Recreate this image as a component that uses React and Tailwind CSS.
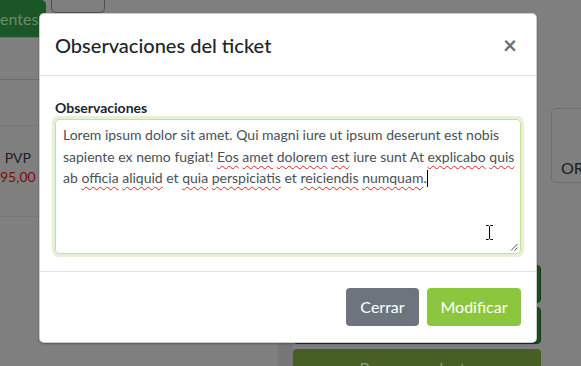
const Sq = ({ children }) => (
  <span className="underline decoration-wavy decoration-[#e02020] decoration-1 underline-offset-[3px]">
    {children}
  </span>
);

export default function App() {
  return (
    <div className="relative w-[581px] h-[366px] overflow-hidden bg-[#7f7f7f] font-['Lato','Liberation_Sans',sans-serif]">
      {/* page behind the backdrop */}
      <div className="flex h-full">
        <div className="w-[278px] shrink-0 flex flex-col">
          <div className="flex items-start shrink-0 h-[38px] border-b border-[#6c6c6c]">
            <div className="w-[46px] h-[37px] bg-[#1a5626] rounded-tr-[5px] flex items-center text-[16px] text-[#6b8c6c] overflow-hidden whitespace-nowrap">
              entes
            </div>
            <div className="ml-[5px] w-[54px] h-[13px] border border-t-0 border-[#4f4f4f] rounded-b-[5px]" />
          </div>
          <div className="shrink-0 h-[42px] border-b border-[#6c6c6c]" />
          <div className="shrink-0 h-[46px] border-b border-[#777777]" />
          <div className="shrink-0 h-[91px] border-b border-[#777777] pt-[22px]">
            <div className="w-[31px] text-right text-[14px] leading-[19px]">
              <div className="text-[#1c1c22]">PVP</div>
              <div className="text-[#7a0d0d]">95,00</div>
            </div>
          </div>
        </div>
        <div className="w-[15px] shrink-0 flex flex-col">
          <div className="mt-[342px] flex-1 bg-[#777777]" />
        </div>
        <div className="w-[248px] shrink-0 flex flex-col pt-[265px]">
          <div className="shrink-0 h-[38px] bg-[#17501f] border border-[#0e3d16] rounded-[4px]" />
          <div className="shrink-0 mt-[4px] h-[37px] bg-[#17501f] border border-[#0e3d16] rounded-[4px]" />
          <div className="shrink-0 mt-[5px] h-[38px] bg-[#475f24] rounded-[4px] flex items-center justify-center text-[16px] text-[#8a9772]">
            Buscar producto
          </div>
        </div>
        <div className="ml-[10px] shrink-0 pt-[108px]">
          <div className="w-[60px] h-[75px] border border-[#6e6e6e] rounded-[5px] flex flex-col justify-end pb-[2px] pl-[9px] text-[16px] text-[#1c1c22]">
            OR
          </div>
        </div>
      </div>

      {/* modal */}
      <div className="absolute left-[39px] top-[13px] w-[498px] bg-white border border-black/20 rounded-[5px] shadow-[0_1px_2px_rgba(0,0,0,0.3)]">
        <div className="h-[62px] flex items-center justify-between px-[15px] border-b border-[#dee2e6]">
          <h5 className="text-[20px] font-medium text-[#212529]">Observaciones del ticket</h5>
          <span className="text-[24px] font-bold leading-none text-[#6e6e6e] mr-[4px]">×</span>
        </div>
        <div className="h-[195px] px-[15px] pt-[22px]">
          <div className="text-[14px] font-bold leading-5 text-[#212529]">Observaciones</div>
          <div className="relative mt-[1px] h-[135px] border border-[#c6e19f] rounded-[4px] ring-[3px] ring-[#e4f1d3] pl-[7px] pt-[4px] text-[14px] leading-[21.5px] text-[#495057] whitespace-nowrap">
            <div>Lorem ipsum dolor sit amet. Qui magni iure ut ipsum deserunt est nobis</div>
            <div>
              sapiente ex nemo fugiat! <Sq>Eos</Sq> <Sq>amet</Sq> <Sq>dolorem</Sq> <Sq>est</Sq> iure sunt At{" "}
              <Sq>explicabo</Sq> <Sq>quis</Sq>
            </div>
            <div>
              ab <Sq>officia</Sq> <Sq>aliquid</Sq> et <Sq>quia</Sq> <Sq>perspiciatis</Sq> et <Sq>reiciendis</Sq>{" "}
              <Sq>numquam</Sq>.
              <span className="inline-block w-px h-[17px] bg-black align-[-4px]" />
            </div>
            <svg className="absolute left-[429px] top-[104px]" width="9" height="17" viewBox="0 0 9 17">
              <path d="M1 1.5h2.5l1 1 1-1H8M4.5 2.5v12M1 15.5h2.5l1-1 1 1H8" stroke="#ffffff" strokeWidth="2.5" fill="none" />
              <path d="M1 1.5h2.5l1 1 1-1H8M4.5 2.5v12M1 15.5h2.5l1-1 1 1H8" stroke="#000000" strokeWidth="1" fill="none" />
            </svg>
            <svg className="absolute right-[2px] bottom-[2px]" width="8" height="8" viewBox="0 0 8 8">
              <path d="M1 7.5L7.5 1M4.5 7.5L7.5 4.5" stroke="#555" strokeWidth="1" fill="none" />
            </svg>
          </div>
        </div>
        <div className="h-[71px] border-t border-[#dee2e6] flex items-start justify-end gap-[8px] px-[15px] pt-[16px]">
          <button className="h-[38px] w-[73px] flex items-center justify-center rounded-[4px] bg-[#6c757d] text-white text-[16px]">Cerrar</button>
          <button className="h-[38px] w-[94px] flex items-center justify-center rounded-[4px] bg-[#8cc63f] text-white text-[16px]">Modificar</button>
        </div>
      </div>
    </div>
  );
}
